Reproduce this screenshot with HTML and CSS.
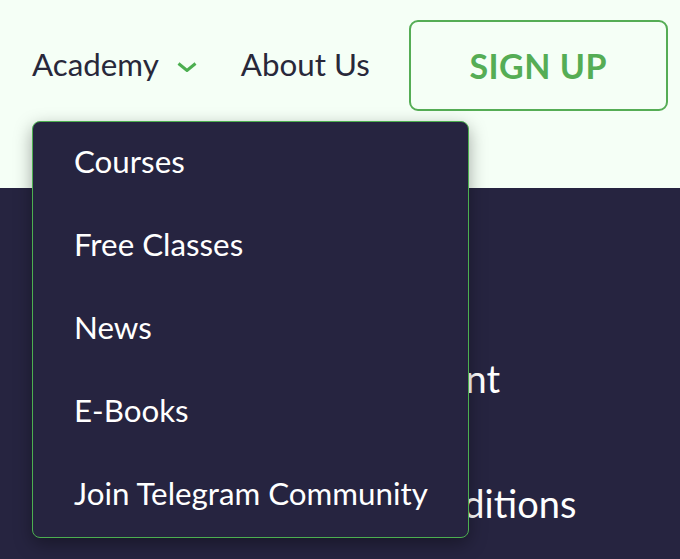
FILE: index.html
```html
<!DOCTYPE html>
<html lang="en">
<head>
<meta charset="utf-8">
<title>Academy menu</title>
<link rel="stylesheet" href="styles.css">
</head>
<body>
<header class="topbar">
  <nav class="nav">
    <div class="nav-item has-menu">
      <span class="nav-link">Academy</span>
      <svg class="chevron" width="20" height="10" viewBox="0 0 20 10" aria-hidden="true">
        <polyline points="1.5,1.5 10,8.5 18.5,1.5" fill="none" stroke="#4caf50" stroke-width="3"/>
      </svg>
      <ul class="dropdown">
        <li class="dropdown-item">Courses</li>
        <li class="dropdown-item">Free Classes</li>
        <li class="dropdown-item">News</li>
        <li class="dropdown-item">E-Books</li>
        <li class="dropdown-item">Join Telegram Community</li>
      </ul>
    </div>
    <span class="nav-link about">About Us</span>
    <a class="signup">SIGN UP</a>
  </nav>
</header>
<main class="dark">
  <div class="links">
    <p class="link">Placement</p>
    <p class="link">Terms &amp; Conditions</p>
  </div>
</main>
</body>
</html>
```
FILE: styles.css
```css
* { box-sizing: border-box; }
html, body { margin: 0; padding: 0; }
body {
  width: 680px;
  height: 559px;
  overflow: hidden;
  background: #262440;
  font-family: "Lato", "Liberation Sans", sans-serif;
}
.topbar {
  height: 188px;
  background: #f5fff6;
  padding: 20px 0 0 32px;
}
.nav {
  display: flex;
  align-items: center;
  height: 91px;
}
.nav-item {
  position: relative;
  display: flex;
  align-items: center;
  height: 100%;
}
.nav-link {
  font-size: 31.3px;
  line-height: 36px;
  margin-bottom: 3px;
  color: #28283a;
}
.chevron {
  margin-left: 18px;
  margin-top: 2px;
  display: block;
}
.about { margin-left: 44px; }
.signup {
  margin-left: 39px;
  width: 259px;
  height: 91px;
  border: 2px solid #55ad55;
  border-radius: 9px;
  display: flex;
  align-items: center;
  justify-content: center;
  color: #55ad55;
  font-weight: 700;
  font-size: 34px;
  letter-spacing: 0.5px;
  padding-top: 0;
}
.dropdown {
  position: absolute;
  left: 0;
  top: 101px;
  width: 437px;
  margin: 0;
  padding: 0;
  list-style: none;
  background: #262440;
  border: 1px solid #4caf50;
  border-radius: 8px;
  box-shadow: 0 6px 18px rgba(0, 0, 0, 0.35);
  z-index: 10;
}
.dropdown-item {
  height: 83px;
  padding: 21px 0 26px 41px;
  font-size: 31.3px;
  line-height: 36px;
  color: #ffffff;
  white-space: nowrap;
}
.dark {
  display: flex;
  justify-content: center;
  padding: 167px 0 0 146px;
}
.links { text-align: center; }
.link {
  margin: 0 0 79px;
  font-size: 38px;
  line-height: 46px;
  color: #ffffff;
}
```
